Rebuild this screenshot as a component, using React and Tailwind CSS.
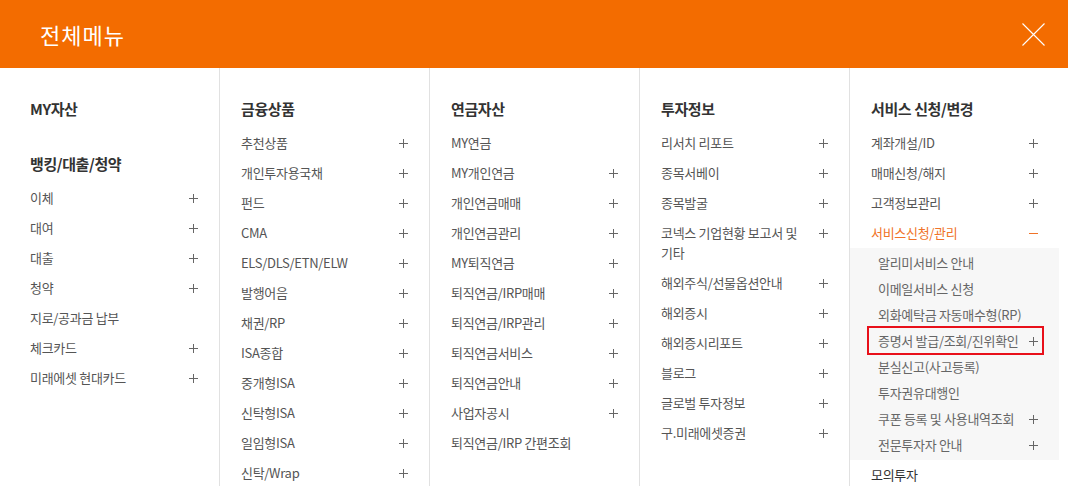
import React from 'react';

const columns = [
  {
    groups: [
      { title: 'MY자산', items: [] },
      {
        title: '뱅킹/대출/청약',
        items: [
          { label: '이체', plus: true },
          { label: '대여', plus: true },
          { label: '대출', plus: true },
          { label: '청약', plus: true },
          { label: '지로/공과금 납부' },
          { label: '체크카드', plus: true },
          { label: '미래에셋 현대카드', plus: true },
        ],
      },
    ],
  },
  {
    groups: [
      {
        title: '금융상품',
        items: [
          { label: '추천상품', plus: true },
          { label: '개인투자용국채', plus: true },
          { label: '펀드', plus: true },
          { label: 'CMA', plus: true },
          { label: 'ELS/DLS/ETN/ELW', plus: true },
          { label: '발행어음', plus: true },
          { label: '채권/RP', plus: true },
          { label: 'ISA종합', plus: true },
          { label: '중개형ISA', plus: true },
          { label: '신탁형ISA', plus: true },
          { label: '일임형ISA', plus: true },
          { label: '신탁/Wrap', plus: true },
        ],
      },
    ],
  },
  {
    groups: [
      {
        title: '연금자산',
        items: [
          { label: 'MY연금' },
          { label: 'MY개인연금', plus: true },
          { label: '개인연금매매', plus: true },
          { label: '개인연금관리', plus: true },
          { label: 'MY퇴직연금', plus: true },
          { label: '퇴직연금/IRP매매', plus: true },
          { label: '퇴직연금/IRP관리', plus: true },
          { label: '퇴직연금서비스', plus: true },
          { label: '퇴직연금안내', plus: true },
          { label: '사업자공시', plus: true },
          { label: '퇴직연금/IRP 간편조회' },
        ],
      },
    ],
  },
  {
    groups: [
      {
        title: '투자정보',
        items: [
          { label: '리서치 리포트', plus: true },
          { label: '종목서베이', plus: true },
          { label: '종목발굴', plus: true },
          { label: ['코넥스 기업현황 보고서 및', '기타'], plus: true },
          { label: '해외주식/선물옵션안내', plus: true },
          { label: '해외증시', plus: true },
          { label: '해외증시리포트', plus: true },
          { label: '블로그', plus: true },
          { label: '글로벌 투자정보', plus: true },
          { label: '구.미래에셋증권', plus: true },
        ],
      },
    ],
  },
];

const subItems = [
  { label: '알리미서비스 안내' },
  { label: '이메일서비스 신청' },
  { label: '외화예탁금 자동매수형(RP)' },
  { label: '증명서 발급/조회/진위확인', plus: true, marked: true },
  { label: '분실신고(사고등록)' },
  { label: '투자권유대행인' },
  { label: '쿠폰 등록 및 사용내역조회', plus: true },
  { label: '전문투자자 안내', plus: true },
];

function Plus({ color = '#666' }) {
  return (
    <svg width="9" height="9" viewBox="0 0 9 9" className="shrink-0">
      <path d="M4.5 0v9M0 4.5h9" stroke={color} strokeWidth="1" />
    </svg>
  );
}

function Minus() {
  return (
    <svg width="9" height="9" viewBox="0 0 9 9" className="shrink-0">
      <path d="M0 4.5h9" stroke="#f07328" strokeWidth="1" />
    </svg>
  );
}

function Item({ item }) {
  const lines = Array.isArray(item.label) ? item.label : [item.label];
  return (
    <li className="flex items-start justify-between py-[5px] text-[13px] leading-[20px] tracking-[-0.3px] text-[#555]">
      <span>
        {lines.map((line, i) => (
          <span key={i} className="block">{line}</span>
        ))}
      </span>
      {item.plus && (
        <span className="flex h-[20px] items-center">
          <Plus />
        </span>
      )}
    </li>
  );
}

function Heading({ children, className = '' }) {
  return (
    <h2 className={`mb-[4px] text-[15px] font-bold leading-[30px] tracking-[-0.4px] text-[#333] ${className}`}>
      {children}
    </h2>
  );
}

export default function App() {
  return (
    <div className="flex h-[486px] w-full flex-col overflow-hidden bg-white" style={{ fontFamily: '"Noto Sans CJK KR", "Noto Sans", sans-serif' }}>
      <header className="flex h-[68px] shrink-0 items-center justify-between bg-[#f36c00] pl-[40px] pr-[23px]">
        <h1 className="text-[22px] leading-none tracking-[1px] text-white">전체메뉴</h1>
        <svg width="23" height="23" viewBox="0 0 23 23">
          <path d="M0.5 0.5L22.5 22.5M22.5 0.5L0.5 22.5" stroke="#fff" strokeWidth="1.1" />
        </svg>
      </header>

      <div className="mx-auto grid h-full w-[1050px] grid-cols-[repeat(5,210px)]">
        {columns.map((col, ci) => (
          <div key={ci} className={`px-[21px] pt-[26px] ${ci > 0 ? 'border-l border-[#e1e1e1]' : ''}`}>
            {col.groups.map((group, gi) => (
              <div key={gi} className={gi > 0 ? 'mt-[25px]' : ''}>
                <Heading>{group.title}</Heading>
                <ul>
                  {group.items.map((item, ii) => (
                    <Item key={ii} item={item} />
                  ))}
                </ul>
              </div>
            ))}
          </div>
        ))}

        <div className="border-l border-[#e1e1e1] pt-[26px]">
          <div className="px-[21px]">
            <Heading>서비스 신청/변경</Heading>
            <ul>
              <Item item={{ label: '계좌개설/ID', plus: true }} />
              <Item item={{ label: '매매신청/해지', plus: true }} />
              <Item item={{ label: '고객정보관리', plus: true }} />
              <li className="flex items-center justify-between py-[5px] text-[13px] leading-[20px] tracking-[-0.3px] text-[#f07328]">
                <span>서비스신청/관리</span>
                <Minus />
              </li>
            </ul>
          </div>
          <ul className="bg-[#f7f7f7] py-[2px]">
            {subItems.map((item, i) => (
              <li
                key={i}
                className="relative flex h-[26px] items-center justify-between pl-[28px] pr-[21px] text-[13px] tracking-[-0.3px] text-[#666]"
              >
                <span>{item.label}</span>
                {item.plus && <Plus />}
                {item.marked && (
                  <span className="pointer-events-none absolute bottom-[-1px] left-[17px] right-[15px] top-[-2px] border-[2.5px] border-[#e8101a]" />
                )}
              </li>
            ))}
          </ul>
          <div className="px-[21px] py-[5px] text-[13px] leading-[20px] tracking-[-0.3px] text-[#333]">모의투자</div>
        </div>
      </div>
    </div>
  );
}
